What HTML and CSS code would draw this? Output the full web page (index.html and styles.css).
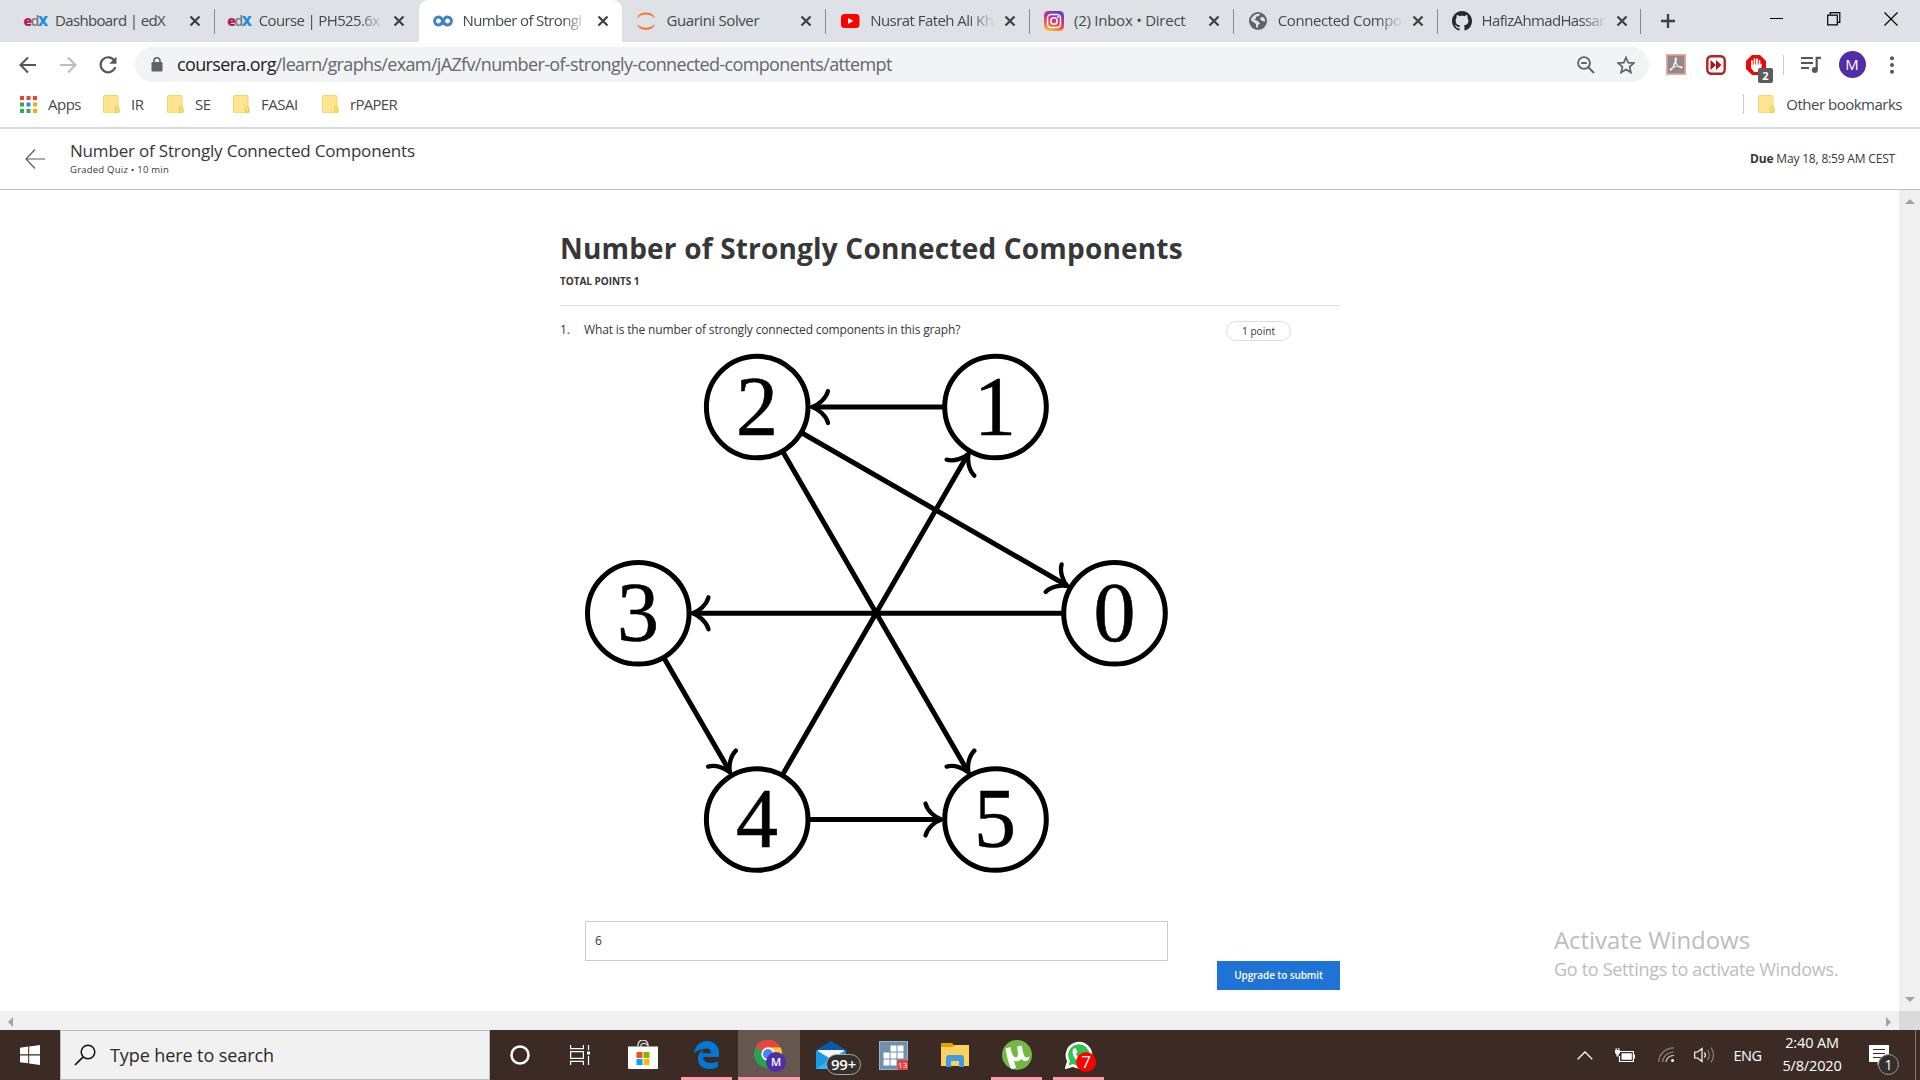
FILE: index.html
```html
<!DOCTYPE html>
<html lang="en">
<head>
<meta charset="utf-8">
<title>Number of Strongly Connected Components</title>
<link rel="stylesheet" href="styles.css">
</head>
<body>
<svg class="defs" width="0" height="0">
  <symbol id="close" viewBox="0 0 12 12"><path d="M1.500 1.500l9 9M10.500 1.500l-9 9" stroke="#3c4043" stroke-width="2.200"/></symbol>
  <symbol id="folder" viewBox="0 0 17 18"><path d="M1.500.5h12.500a1 1 0 0 1 1 1v10.500l1 1v4a.8.8 0 0 1-.8.8H1.500a1 1 0 0 1-1-1V1.500a1 1 0 0 1 1-1z" fill="#ffe591" stroke="#f5d36b"/><path d="M12.500 17.300v-4.200a1.600 1.600 0 0 1 3.300 0v4.200z" fill="#ffdf70" stroke="#eec23e" stroke-width=".8"/></symbol>
</svg>

<header class="tabs">
  <div class="tab"><span class="fav edx"><b>e</b><i>d</i><em>X</em></span><span class="label">Dashboard | edX</span><svg class="x"><use href="#close"/></svg></div>
  <div class="tab noline"><span class="fav edx"><b>e</b><i>d</i><em>X</em></span><span class="label fade">Course | PH525.6x</span><svg class="x"><use href="#close"/></svg></div>
  <div class="tab active"><svg class="fav" viewBox="0 0 20 20"><path d="M10 10C8.600 7 7.600 6 5.600 6a4 4 0 0 0 0 8C7.600 14 8.800 12.600 10 10S12.400 6 14.400 6a4 4 0 0 1 0 8C12.400 14 11.400 13 10 10z" fill="none" stroke="#3f83cc" stroke-width="3"/></svg><span class="label fade">Number of Strongl</span><svg class="x"><use href="#close"/></svg></div>
  <div class="tab"><svg class="fav" viewBox="0 0 20 20"><path d="M1 7a9.500 8 0 0 1 18 0Q10 .2 1 7zM1 13.500a9.500 8 0 0 0 18 0Q10 19.800 1 13.500z" fill="#f47b2a"/></svg><span class="label mid">Guarini Solver</span><svg class="x"><use href="#close"/></svg></div>
  <div class="tab"><svg class="fav" viewBox="0 0 20 20"><rect x="1" y="3" width="18.500" height="14" rx="3.500" fill="#f00"/><path d="M8 7l5.500 3L8 13z" fill="#fff"/></svg><span class="label fade nus">Nusrat Fateh Ali Kh</span><svg class="x"><use href="#close"/></svg></div>
  <div class="tab"><svg class="fav" viewBox="0 0 20 20"><defs><linearGradient id="ig" x1=".25" y1="1" x2=".6" y2="0"><stop offset="0" stop-color="#fdc050"/><stop offset=".3" stop-color="#f4633a"/><stop offset=".6" stop-color="#d42c85"/><stop offset="1" stop-color="#6042c9"/></linearGradient></defs><rect width="20" height="20" rx="4.500" fill="url(#ig)"/><rect x="3.500" y="3.500" width="13" height="13" rx="3.500" fill="none" stroke="#fff" stroke-width="1.500"/><circle cx="10" cy="10" r="3.200" fill="none" stroke="#fff" stroke-width="1.500"/><circle cx="14" cy="6" r=".9" fill="#fff"/></svg><span class="label inbox">(2) Inbox • Direct</span><svg class="x"><use href="#close"/></svg></div>
  <div class="tab"><svg class="fav" viewBox="0 0 20 20"><circle cx="10" cy="10" r="9" fill="#5f6368"/><path d="M3 8c2-4 6-5.800 9-5l-1 2-3 .8v2l-2 1 4 1.200 2 2.500-2 1.500v3L8 16v-3L3 9.500zM13 6l3 .5 1.500 4-3.500-.5-2-2z" fill="#dee1e6"/></svg><span class="label fade mid">Connected Compo</span><svg class="x"><use href="#close"/></svg></div>
  <div class="tab"><svg class="fav" viewBox="0 0 16 16"><path fill="#24292e" d="M8 0C3.580 0 0 3.580 0 8c0 3.540 2.290 6.530 5.470 7.590.4.070.55-.17.55-.38 0-.19-.01-.82-.01-1.490-2.010.37-2.530-.49-2.690-.94-.09-.23-.48-.94-.82-1.130-.28-.15-.68-.52-.01-.53.63-.01 1.080.58 1.230.82.72 1.210 1.870.87 2.330.66.070-.52.28-.87.51-1.070-1.780-.2-3.640-.89-3.640-3.950 0-.87.31-1.590.82-2.150-.08-.2-.36-1.020.08-2.120 0 0 .67-.21 2.200.82.64-.18 1.320-.27 2-.27s1.360.09 2 .27c1.530-1.040 2.200-.82 2.200-.82.44 1.100.16 1.920.08 2.120.51.56.82 1.270.82 2.150 0 3.070-1.870 3.750-3.650 3.950.29.25.54.73.54 1.480 0 1.070-.01 1.930-.01 2.200 0 .21.15.46.55.38A8.010 8.010 0 0 0 16 8c0-4.420-3.580-8-8-8z"/></svg><span class="label fade">HafizAhmadHassar</span><svg class="x"><use href="#close"/></svg></div>
  <svg class="newtab" viewBox="0 0 16 16"><path d="M8 1v14M1 8h14" stroke="#3c4043" stroke-width="2.300"/></svg>
  <div class="wincontrols">
    <svg viewBox="0 0 14 14"><path d="M0 6.500h13" stroke="#000"/></svg>
    <svg viewBox="0 0 14 14"><path d="M.7 3.200h9.600v9.600H.7zM3.200 3V.7h9.600v9.600h-2.400" fill="none" stroke="#000" stroke-width="1.200"/></svg>
    <svg viewBox="0 0 14 14"><path d="M.5.5l13 13M13.500.5l-13 13" stroke="#000" stroke-width="1.200"/></svg>
  </div>
</header>

<nav class="toolbar">
  <div class="nav">
    <svg viewBox="0 0 20 20"><path d="M18 10H3M10 2.500L2.500 10l7.500 7.500" fill="none" stroke="#54585c" stroke-width="2.100"/></svg>
    <svg viewBox="0 0 20 20"><path d="M2 10h15M10 2.500l7.500 7.500-7.500 7.500" fill="none" stroke="#babcbe" stroke-width="2.100"/></svg>
    <svg viewBox="0 0 20 20"><path d="M16.300 5.500A7.500 7.500 0 1 0 17.300 12" fill="none" stroke="#54585c" stroke-width="2.200"/><path d="M18.500 1.500v7.300h-7.300z" fill="#54585c"/></svg>
  </div>
  <div class="omnibox">
    <svg class="lock" viewBox="0 0 12 15"><rect x=".5" y="5" width="11" height="9.500" rx="1.200" fill="#5f6368"/><path d="M3 6V3.800a3 3 0 0 1 6 0V6" fill="none" stroke="#5f6368" stroke-width="1.600"/></svg>
    <span class="url"><span>coursera.org</span>/learn/graphs/exam/jAZfv/number-of-strongly-connected-components/attempt</span>
    <svg class="obicon" viewBox="0 0 18 18"><circle cx="7" cy="7" r="5.900" fill="none" stroke="#5f6368" stroke-width="1.900"/><path d="M4.200 7h5.600M11 11l6 6" stroke="#5f6368" stroke-width="1.900"/></svg>
    <svg class="obicon" viewBox="0 0 18 18"><path d="M9 1.500l2.200 5.200 5.700.4-4.300 3.800 1.300 5.600L9 13.500l-4.900 3 1.300-5.600L1.100 7.100l5.700-.4z" fill="none" stroke="#5f6368" stroke-width="1.700"/></svg>
  </div>
  <div class="ext">
    <svg width="20" height="21" viewBox="0 0 20 21"><rect x=".8" y=".8" width="18.400" height="19.400" fill="#918a89" stroke="#f3a49b" stroke-width="1.600"/><path d="M4 16.500c2-1 5-6 5.500-12 .3-1.500 1.800-.5.500 3-1.200 3.500-3.500 7-5 8.500-1.500.5-1-1 1.500-2.200 3-1.500 7-1.800 9.500-.8 1 1.800-2.500 1-5-2.500-1.500-2-2-4-2-6" fill="none" stroke="#f4efee" stroke-width="1.100"/></svg>
    <svg width="20" height="20" viewBox="0 0 20 20"><rect x="1.300" y="1.300" width="17.400" height="17.400" rx="4" fill="#fff" stroke="#b5201c" stroke-width="2.400"/><path d="M4.500 5l5.500 5-5.500 5zM10 5l5.500 5-5.500 5z" fill="#a91813"/></svg>
    <div class="abp"><svg width="20" height="20" viewBox="0 0 20 20"><path d="M6 0h8l6 6v8l-6 6H6l-6-6V6z" fill="#ea0808"/><path d="M6 11V6M8.500 10V4M11 10V4M13.500 11V5.500" stroke="#fff" stroke-width="1.700" stroke-linecap="round"/><path d="M5.100 9.500h9.300l1.600-1-1 5-2.500 3.500H8L5.100 13z" fill="#fff"/></svg><span class="badge">2</span></div>
    <i class="sep"></i>
    <svg width="20" height="18" viewBox="0 0 20 18"><path d="M0 2h12M0 7h12M0 12h8" stroke="#54585c" stroke-width="2"/><path d="M15.700 14V1.800H20" fill="none" stroke="#54585c" stroke-width="2.200"/><circle cx="13.800" cy="14" r="3" fill="#54585c"/></svg>
    <span class="avatar">M</span>
    <svg width="4" height="18" viewBox="0 0 4 18"><g fill="#54585c"><circle cx="2" cy="2.200" r="2"/><circle cx="2" cy="9" r="2"/><circle cx="2" cy="15.800" r="2"/></g></svg>
  </div>
</nav>

<nav class="bookmarks">
  <svg class="apps" viewBox="0 0 17 17"><path fill="#ea4335" d="M0 0h4v4H0zM6.500 0h4v4h-4zM13 0h4v4h-4z"/><path fill="#34a853" d="M0 6.500h4v4H0zM0 13h4v4H0zM6.500 13h4v4h-4z"/><path fill="#2a8af5" d="M6.500 6.500h4v4h-4z"/><path fill="#fbab08" d="M13 6.500h4v4h-4zM13 13h4v4h-4z"/></svg><span class="bm apps-t">Apps</span>
  <svg class="folder"><use href="#folder"/></svg><span class="bm ir">IR</span>
  <svg class="folder"><use href="#folder"/></svg><span class="bm se">SE</span>
  <svg class="folder"><use href="#folder"/></svg><span class="bm fasai">FASAI</span>
  <svg class="folder"><use href="#folder"/></svg><span class="bm rpaper">rPAPER</span>
  <div class="other"><svg class="folder"><use href="#folder"/></svg><span class="bm">Other bookmarks</span></div>
</nav>

<header class="coursebar">
  <svg class="back" viewBox="0 0 20 20"><path d="M20 10H1M10 .5L1 10l9 9.500" fill="none" stroke="#5c5c5c" stroke-width="1.200"/></svg>
  <div class="course"><div class="ctitle">Number of Strongly Connected Components</div><div class="csub">Graded Quiz • 10 min</div></div>
  <div class="due"><b>Due</b> May 18, 8:59 AM CEST</div>
</header>

<div class="viewport">
  <main class="page">
    <h1>Number of Strongly Connected Components</h1>
    <div class="total">TOTAL POINTS 1</div>
    <section class="question">
      <div class="prompt"><span class="num">1.</span><span class="qtext">What is the number of strongly connected components in this graph?</span><span class="pill">1 point</span></div>
      <svg class="graph" width="586" height="520" viewBox="584 353 586 520">
        <g stroke="#000" stroke-width="5" fill="none">
          <path d="M943 407H813M802 433L1066 585M783 452L967 770M783 774L967 456M1063 613.300H694M664 658L729 770M808 819.500H940"/>
          <circle cx="757.200" cy="407" r="50.800"/><circle cx="995.500" cy="407" r="50.800"/>
          <circle cx="638.300" cy="613.300" r="50.800"/><circle cx="1114.500" cy="613.300" r="50.800"/>
          <circle cx="757.200" cy="819.500" r="50.800"/><circle cx="995.500" cy="819.500" r="50.800"/>
        </g>
        <g fill="none" stroke="#000" stroke-width="4.300" stroke-linecap="round" stroke-linejoin="round">
          <path transform="translate(812 407) rotate(180)" d="M-16-16C-14-8-6-2 0 0C-6 2-14 8-16 16"/>
          <path transform="translate(692.500 613.300) rotate(180)" d="M-16-16C-14-8-6-2 0 0C-6 2-14 8-16 16"/>
          <path transform="translate(1067.500 586.200) rotate(30)" d="M-16-16C-14-8-6-2 0 0C-6 2-14 8-16 16"/>
          <path transform="translate(968.500 453.800) rotate(-60)" d="M-16-16C-14-8-6-2 0 0C-6 2-14 8-16 16"/>
          <path transform="translate(968.500 772.500) rotate(60)" d="M-16-16C-14-8-6-2 0 0C-6 2-14 8-16 16"/>
          <path transform="translate(730 772.500) rotate(60)" d="M-16-16C-14-8-6-2 0 0C-6 2-14 8-16 16"/>
          <path transform="translate(941.500 819.500)" d="M-16-16C-14-8-6-2 0 0C-6 2-14 8-16 16"/>
        </g>
        <g class="digits"><text x="757" y="434.500">2</text><text x="995" y="434.500">1</text><text x="638" y="641">3</text><text x="1114.500" y="641">0</text><text x="757" y="847">4</text><text x="995" y="847">5</text></g>
      </svg>
      <div class="answer">6</div>
    </section>
    <div class="submit">Upgrade to submit</div>
  </main>
  <aside class="watermark"><div class="w1">Activate Windows</div><div class="w2">Go to Settings to activate Windows.</div></aside>
  <div class="vscroll"><svg viewBox="0 0 10 5"><path d="M0 5L5 0l5 5z" fill="#a3a3a3"/></svg><svg viewBox="0 0 10 5"><path d="M0 0l5 5 5-5z" fill="#a3a3a3"/></svg></div>
</div>
<div class="hscroll"><div class="track"><svg viewBox="0 0 5 10"><path d="M5 0L0 5l5 5z" fill="#a3a3a3"/></svg><svg viewBox="0 0 5 10"><path d="M0 0l5 5-5 5z" fill="#a3a3a3"/></svg></div></div>

<footer class="taskbar">
  <div class="start"><svg width="20" height="20" viewBox="0 0 20 20"><path fill="#fff" d="M0 2.700l8.200-1.100v7.700H0zM9.200 1.400L20 0v9.300H9.200zM0 10.400h8.200v7.900L0 17.300zM9.200 10.400H20V20L9.200 18.500z"/></svg></div>
  <div class="search"><svg width="22" height="22" viewBox="0 0 22 22"><circle cx="14" cy="8" r="6.800" fill="none" stroke="#111" stroke-width="1.500"/><path d="M9.200 12.800L1 21" stroke="#111" stroke-width="1.700"/></svg><span>Type here to search</span></div>
  <div class="slot"><svg width="22" height="22" viewBox="0 0 22 22"><circle cx="11" cy="11" r="8.500" fill="none" stroke="#fff" stroke-width="2.500"/></svg></div>
  <div class="slot"><svg width="20" height="20" viewBox="0 0 20 20"><path d="M.6 0v3.600h12.800V0M.6 20v-3.600h12.800V20M.6 6.600h12.800v6.800H.6zM18.500 0v5M18.500 11v9" fill="none" stroke="#fff" stroke-width="1.200"/><path d="M17 6.500h3v3h-3z" fill="#fff"/></svg></div>
  <div class="task store"><svg width="30" height="30" viewBox="0 0 30 30"><path d="M0 6.500h30V28a1 1 0 0 1-1 1H1a1 1 0 0 1-1-1z" fill="#fff"/><path d="M10 8V5a5 5 0 0 1 10 0v3M13 7V5a3.500 3.500 0 0 1 6 0" fill="none" stroke="#ddd" stroke-width="1.300"/><path d="M8.500 12h6v6h-6z" fill="#f25022"/><path d="M15.500 12h6v6h-6z" fill="#7fba00"/><path d="M8.500 19h6v6h-6z" fill="#00a4ef"/><path d="M15.500 19h6v6h-6z" fill="#ffb900"/></svg></div>
  <div class="task run"><svg width="26" height="28" viewBox="0 0 26 28"><path fill="#0078d7" d="M0 12.500C1 5 6 0 13.500 0 20.500 0 25 5 25 12v4H9c.2 4.500 3.800 6 8 6 2.700 0 5-.7 7-1.800v5.600C21.500 27.300 19 28 15.500 28 8.500 28 4 24 4 17.800c0-4.200 2.300-7.500 6-9.300-1 1-1.500 2.300-1.700 3.700h8.800c0-3-1.500-4.800-4.800-4.800C7.500 7.400 3 9.500 0 12.500z"/></svg></div>
  <div class="task run current"><svg width="32" height="32" viewBox="0 0 32 32"><circle cx="15" cy="15" r="14" fill="#28a352"/><path d="M15 15L2.500 8.500A14 14 0 0 1 27.500 8.600z" fill="#e8453c"/><path d="M15 8.500h12.500A14 14 0 0 1 15 29l6-11z" fill="#fdca3c"/><circle cx="15" cy="15" r="6.700" fill="#fff"/><circle cx="15" cy="15" r="5" fill="#4688f1"/></svg><span class="me">M</span></div>
  <div class="task mail"><svg width="30" height="28" viewBox="0 0 30 28"><path d="M0 9L15 0l15 9v4H0z" fill="#0a58a8"/><path d="M2 9h26v10H2z" fill="#f5f5f5"/><path d="M0 9l15 9L30 9v19H0z" fill="#199be5"/><path d="M0 28L15 18l15 10z" fill="#33b3f0"/></svg><span class="count">99+</span></div>
  <div class="task"><svg width="29" height="29" viewBox="0 0 29 29"><rect x=".5" y=".5" width="28" height="28" fill="#6f91ac" stroke="#9db4c5"/><path d="M11.500 4.500h6v6h-6zM18.500 4.500h6v6h-6zM4.500 11.500h6v6h-6zM11.500 11.500h6v6h-6zM18.500 11.500h6v6h-6zM4.500 18.500h6v6h-6zM11.500 18.500h6v6h-6z" fill="#fff"/><path d="M18.500 19H29v10H18.500z" fill="#e2413f"/><text class="thirteen" x="23.700" y="27.300">13</text></svg></div>
  <div class="task"><svg width="28" height="24" viewBox="0 0 28 24"><path d="M0 0h11l2 2v5H0z" fill="#e2a100"/><path d="M0 4h11l3-2h14v21H0z" fill="#ffd25e"/><path d="M5 24V15a3 3 0 0 1 3-3h12a3 3 0 0 1 3 3v9h-5v-6h-8v6z" fill="#3c9be3"/></svg></div>
  <div class="task run"><svg width="30" height="30" viewBox="0 0 30 30"><circle cx="15" cy="15" r="15" fill="#74b844"/><path d="M3.500 8.500L8.500 7c.5 4 2 10 5 10.300 3 0 3-3.500 1.500-10.500l4.800-1.300c1 6 2 11.800 4.500 12l3.200-1-1 3.200c-3 2.300-6 1-7-1-1.500 2.500-5 3.200-7.500 1.800l2 7.500-4.500 1.200C6.500 24 4.800 16 3.500 8.500z" fill="#fff"/></svg></div>
  <div class="task run wa"><svg width="28" height="28" viewBox="0 0 28 28"><path d="M1.500 26.500l2-6.500A12 12 0 1 1 8 24.500z" fill="#2fc351" stroke="#fff" stroke-width="2.600"/><path d="M8 8l2.500-1 2 4-1.500 2c1 2 2.500 3.500 5 4.500l2-1.500 3 2c-1 4-5 3.500-8.500 1.500S6.500 12.500 8 8z" fill="#fff"/></svg><span class="seven">7</span></div>
  <div class="tray">
    <svg width="16" height="9" viewBox="0 0 16 9"><path d="M.7 8.300L8 1l7.300 7.300" fill="none" stroke="#fff" stroke-width="1.300"/></svg>
    <svg width="21" height="15" viewBox="0 0 21 15"><path d="M5 3.500h13.400v10H4.500V8" fill="none" stroke="#fff" stroke-width="1.200"/><path d="M6.500 5.200h10.300v6.600H6.500zM18.500 6.500H20v4h-1.500zM0 2h5v3L3.500 6.500v2h-2v-2L0 5zM.7 0h1v2h-1zM3.300 0h1v2h-1z" fill="#fff"/></svg>
    <svg width="17" height="16" viewBox="0 0 17 16"><g fill="none" stroke-width="1.200"><path d="M.6 15A15 15 0 0 1 16 .8M4.500 15A11 11 0 0 1 16 5" stroke="#8b827d"/><path d="M8 15a7.500 7.500 0 0 1 8-6.500" stroke="#d8d4d2"/></g><circle cx="14.500" cy="13.500" r="1.500" fill="#fff"/></svg>
    <svg width="22" height="18" viewBox="0 0 22 18"><g fill="none" stroke="#fff" stroke-width="1.200"><path d="M.7 6h3L8 2.500v13L3.700 12h-3zM10.500 6.500q1.800 2.500 0 5"/><path d="M13.500 4q3.600 5 0 10M17 1.500q5 7.500 0 15" stroke="#8b827d"/></g></svg>
    <span class="lang">ENG</span>
    <div class="clock"><div>2:40 AM</div><div>5/8/2020</div></div>
    <div class="note"><svg width="20" height="20" viewBox="0 0 20 20"><path d="M0 0h20v17h-8l-3.500 3v-3H0z" fill="#fff"/><path d="M4 4.500h12M4 8.500h12M4 12.500h8" stroke="#3b2b24" stroke-width="1.200"/></svg><span>1</span></div>
    <i class="peek"></i>
  </div>
</footer>
</body>
</html>
```
FILE: styles.css
```css
* { box-sizing: border-box; }
body {
  margin: 0; width: 1920px; height: 1080px; overflow: hidden;
  display: flex; flex-direction: column;
  background: #fff; color: #373737;
  font-family: "Open Sans", "Noto Sans", sans-serif;
  white-space: nowrap;
}
.defs { position: absolute; }
svg { display: block; flex: none; }

/* Tab strip */
.tabs { height: 42px; flex: none; display: flex; align-items: center; background: #dee1e6; padding-left: 11px; }
.tab { width: 203.8px; height: 42px; display: flex; align-items: center; padding-left: 14px; position: relative; font-size: 15px; letter-spacing: -.65px; color: #45494d; }
.tab::after { content: ""; position: absolute; right: 0; top: 9px; width: 1px; height: 25px; background: #85888c; }
.tab.noline::after, .tab.active::after { display: none; }
.tab.active { background: #fff; border-radius: 9px 9px 0 0; }
.fav { width: 20px; height: 20px; }
.edx { display: flex; align-items: center; justify-content: center; font-size: 14px; letter-spacing: -1.5px; line-height: 20px; font-weight: 800; }
.edx b { color: #b01664; font-weight: 800; }
.edx i { color: #777; font-style: normal; font-weight: 600; }
.edx em { color: #1f8fe0; font-style: normal; }
.label { width: 125px; margin: 0 9px 2px 10px; line-height: 24px; }
.mid { letter-spacing: -.4px; }
.nus { letter-spacing: -.55px; }
.inbox { letter-spacing: -.25px; }
.fade { -webkit-mask-image: linear-gradient(90deg, #000 80%, transparent 100%); mask-image: linear-gradient(90deg, #000 80%, transparent 100%); }
.x { width: 12px; height: 12px; }
.newtab { width: 16px; height: 16px; margin-left: 19px; }
.wincontrols { margin-left: auto; display: flex; gap: 43px; padding: 0 22px 5px 0; }
.wincontrols svg { width: 14px; height: 14px; }

/* Toolbar */
.toolbar { height: 45px; flex: none; display: flex; align-items: center; padding-left: 8px; }
.nav { display: grid; grid-template-columns: repeat(3, 40px); justify-items: center; margin-right: 7px; }
.nav svg { width: 20px; height: 20px; }
.omnibox { width: 1514px; height: 35px; border-radius: 18px; background: #f1f3f4; display: flex; align-items: center; padding: 0 14px 0 16px; }
.lock { width: 12px; height: 15px; margin-right: 14px; }
.url { flex: 1; padding-bottom: 1px; font-size: 18px; letter-spacing: -.65px; color: #64686c; }
.url span { color: #202124; }
.obicon { width: 18px; height: 18px; margin-left: 22px; }
.ext { display: grid; grid-template-columns: 40px 40px 40px 14px 42px 40px 39px; margin-left: 7px; align-items: center; justify-items: center; }
.abp { position: relative; }
.badge { position: absolute; left: 12px; top: 13px; width: 15px; height: 15px; border-radius: 2px; background: #5c5c5c; color: #fff; font: bold 11px/15px "Open Sans", sans-serif; text-align: center; }
.sep { width: 1px; height: 20px; background: #c8cacc; }
.avatar { width: 27px; height: 27px; border-radius: 50%; background: #512da8; color: #fff; font-size: 15px; line-height: 27px; text-align: center; }

/* Bookmarks */
.bookmarks { height: 42px; flex: none; display: flex; align-items: center; padding: 0 18px 6px 20px; border-bottom: 2px solid #d9dade; }
.apps { width: 17px; height: 17px; margin-right: 11px; }
.bm { font-size: 15px; line-height: 24px; letter-spacing: -.5px; color: #45494d; }
.apps-t { width: 55px; }
.folder { width: 17px; height: 18px; margin-right: 11px; }
.ir { width: 36px; }
.se { width: 38px; }
.fasai { width: 61px; }
.rpaper { letter-spacing: -.7px; }
.other { margin-left: auto; display: flex; align-items: center; border-left: 1px solid #c8cacc; height: 20px; padding-left: 14px; }

/* Course header */
.coursebar { height: 61px; flex: none; display: flex; align-items: center; border-bottom: 1px solid #bcbcbc; padding: 0 25px; }
.back { width: 20px; height: 20px; margin-right: 25px; }
.course { flex: 1; padding-bottom: 4px; }
.ctitle { font-size: 17px; line-height: 24px; letter-spacing: -.18px; }
.csub { font-size: 9.5px; line-height: 13px; letter-spacing: .23px; }
.due { padding-bottom: 2px; font-size: 12px; letter-spacing: -.18px; }

/* Page */
.viewport { height: 821px; flex: none; display: flex; }
.page { width: 780px; margin-left: 560px; padding-top: 38px; }
h1 { margin: 0; font-size: 28px; line-height: 40px; letter-spacing: .18px; }
.total { height: 38px; padding-top: 6px; font-size: 10px; line-height: 14px; font-weight: bold; letter-spacing: -.03px; border-bottom: 1px solid #dedede; }
.prompt { display: flex; height: 47px; padding: 14px 49px 0 0; font-size: 12px; line-height: 20px; letter-spacing: -.15px; }
.num { width: 24px; }
.qtext { flex: 1; }
.pill { margin-top: 1px; width: 65px; height: 20px; border: 1px solid #dcdcdc; border-radius: 10px; font-size: 10px; line-height: 19px; letter-spacing: .05px; text-align: center; }
.graph { margin-left: 24px; }
.digits { font: 84px "Liberation Serif", serif; text-anchor: middle; fill: #000; stroke: #000; stroke-width: .6px; }
.answer { margin: 48px 0 0 25px; width: 583px; height: 40px; border: 1px solid #c8cad6; padding-left: 9px; font-size: 12px; line-height: 38px; }
.submit { margin-left: auto; width: 123px; height: 29px; background: #2073d6; color: #fff; font-size: 10px; font-weight: 600; line-height: 29px; letter-spacing: -.1px; text-align: center; }
.watermark { margin-left: 214px; width: 345px; padding-top: 733px; color: #bdbdbd; }
.w1 { font-size: 24px; line-height: 34px; letter-spacing: -.06px; }
.w2 { font-size: 18px; line-height: 25px; letter-spacing: -.31px; }
.vscroll { width: 21px; background: #f0f0f0; display: flex; flex-direction: column; align-items: center; justify-content: space-between; padding: 9px 0; }
.vscroll svg { width: 10px; height: 5px; }
.hscroll { height: 19px; flex: none; background: #dadada; }
.track { width: 1899px; height: 19px; background: #f0f0f0; display: flex; align-items: center; justify-content: space-between; padding: 2px 8px 0; }
.track svg { width: 5px; height: 10px; }

/* Taskbar */
.taskbar { height: 50px; flex: none; display: flex; background: #3b2b24; color: #fff; }
.start { width: 60px; display: grid; place-items: center; }
.search { width: 430px; background: #f1f1f1; border: 1px solid #bdbdbd; display: flex; align-items: center; padding-left: 13px; gap: 14px; color: #2a2a2a; font-size: 18px; letter-spacing: -.09px; }
.slot { width: 60px; display: grid; place-items: center; }
.task { width: 62px; display: grid; place-items: center; position: relative; }
.store { width: 64px; margin-left: 2px; }
.store svg { margin-right: 2px; }
.run::after { content: ""; position: absolute; left: 5px; right: 6px; bottom: 0; height: 3px; background: #ff9ca6; }
.current { background: #65574f; }
.run.current::after { left: 0; right: 0; }
.me { position: absolute; left: 28px; top: 22px; width: 20px; height: 20px; border-radius: 50%; background: #512da8; font-size: 11px; line-height: 20px; text-align: center; font-weight: 600; }
.count { position: absolute; left: 26px; top: 24px; width: 35px; height: 21px; border: 1px solid #aaa; border-radius: 11px; background: #35302d; font-size: 15px; line-height: 19px; text-align: center; font-weight: 600; letter-spacing: -.3px; }
.thirteen { font: 8px "Open Sans", sans-serif; fill: #fff; text-anchor: middle; }
.seven { position: absolute; left: 28px; top: 22px; width: 20px; height: 20px; border-radius: 50%; background: #f00; font-size: 17px; line-height: 20px; text-align: center; }
.tray { margin-left: auto; display: grid; grid-template-columns: 50px 30px 52px 26px 59px 70px 64px 9px; align-items: center; justify-items: center; font-size: 14.5px; }
.lang { letter-spacing: -.5px; }
.clock { line-height: 22.6px; letter-spacing: -.15px; text-align: center; }
.note { position: relative; }
.note span { position: absolute; left: 9px; top: 9px; width: 21px; height: 21px; border: 1px solid #999; border-radius: 50%; background: #35302d; font-size: 14px; line-height: 19px; text-align: center; }
.peek { width: 1px; height: 50px; background: #85796f; }
```
